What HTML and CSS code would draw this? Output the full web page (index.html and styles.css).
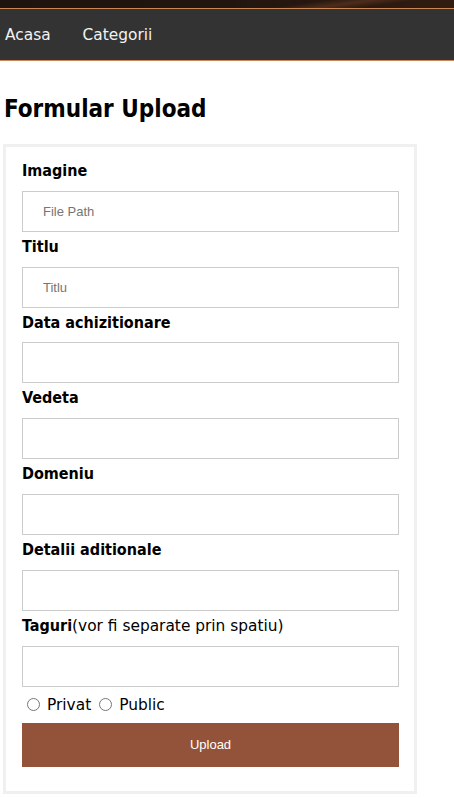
FILE: index.html
```html
<!DOCTYPE html>
<html lang="ro">
<head>
<meta charset="utf-8">
<title>Formular Upload</title>
<link rel="stylesheet" href="styles.css">
</head>
<body>
<header class="banner"></header>
<nav class="nav">
  <a class="nav-link" href="#">Acasa</a>
  <a class="nav-link" href="#">Categorii</a>
</nav>
<main class="main">
  <h1 class="title">Formular Upload</h1>
  <form class="form-box">
    <label class="field-label">Imagine</label>
    <input class="field" type="text" placeholder="File Path">
    <label class="field-label">Titlu</label>
    <input class="field" type="text" placeholder="Titlu">
    <label class="field-label">Data achizitionare</label>
    <input class="field" type="text">
    <label class="field-label">Vedeta</label>
    <input class="field" type="text">
    <label class="field-label">Domeniu</label>
    <input class="field" type="text">
    <label class="field-label">Detalii aditionale</label>
    <input class="field" type="text">
    <label class="field-label"><b>Taguri</b><span class="hint">(vor fi separate prin spatiu)</span></label>
    <input class="field" type="text">
    <div class="radios">
      <input class="radio" type="radio" name="vis" id="privat"><label class="radio-label" for="privat">Privat</label>
      <input class="radio" type="radio" name="vis" id="public"><label class="radio-label" for="public">Public</label>
    </div>
    <button class="submit" type="button">Upload</button>
  </form>
</main>
</body>
</html>
```

FILE: styles.css
```css
* { box-sizing: border-box; }
body {
  margin: 0;
  font-family: "DejaVu Sans", Verdana, sans-serif;
  color: #000;
  background: #fff;
}
.banner {
  height: 9px;
  background:
    linear-gradient(172deg, transparent 40%, rgba(120,70,40,0.45) 55%, transparent 70%) right / 55% 100% no-repeat,
    linear-gradient(90deg, #1e130e 0%, #221510 50%, #2a180f 80%, #321c11 100%);
  border-bottom: 1px solid #c98656;
}
.nav {
  height: 52px;
  background: #333333;
  border-bottom: 1px solid #c98656;
  display: flex;
  align-items: center;
  padding-left: 5px;
  gap: 32px;
}
.nav-link {
  color: #f2f2f2;
  text-decoration: none;
  font-size: 15.4px;
  font-family: "DejaVu Sans", Verdana, sans-serif;
}
.main {
  padding: 0 4px;
}
.title {
  margin: 34px 0 0;
  font-family: "DejaVu Sans Condensed", "DejaVu Sans", sans-serif;
  font-size: 24px;
  line-height: 28px;
  font-weight: bold;
}
.form-box {
  margin: 21px 0 0 -1px;
  width: 414px;
  border: 3px solid #f0f0f0;
  padding: 15px 16px 24px;
  display: flex;
  flex-direction: column;
}
.field-label {
  display: block;
  height: 18.8px;
  font-family: "DejaVu Sans Condensed", "DejaVu Sans", sans-serif;
  font-size: 16px;
  line-height: 18.8px;
  font-weight: bold;
  margin-bottom: 10px;
  white-space: nowrap;
}
.field-label .hint {
  font-family: "DejaVu Sans", Verdana, sans-serif;
  font-weight: normal;
  font-size: 15.4px;
  line-height: 18.8px;
}
.field {
  display: block;
  width: 377px;
  height: 41px;
  border: 1px solid #cccccc;
  padding: 0 20px;
  margin: 0 0 6px;
  font-family: "Liberation Sans", Arial, sans-serif;
  font-size: 13px;
  outline: none;
}
.field::placeholder { color: #757575; }
.radios {
  display: flex;
  align-items: center;
  height: 24px;
  margin: 0 0 6px;
  font-size: 15.4px;
}
.radio {
  width: 13px;
  height: 13px;
  margin: 0 7px 0 5px;
}
.radio-label { margin-right: 3px; }
.submit {
  height: 44px;
  width: 377px;
  border: none;
  background: #93533a;
  color: #fff;
  font-family: "Liberation Sans", Arial, sans-serif;
  font-size: 13px;
}
```
